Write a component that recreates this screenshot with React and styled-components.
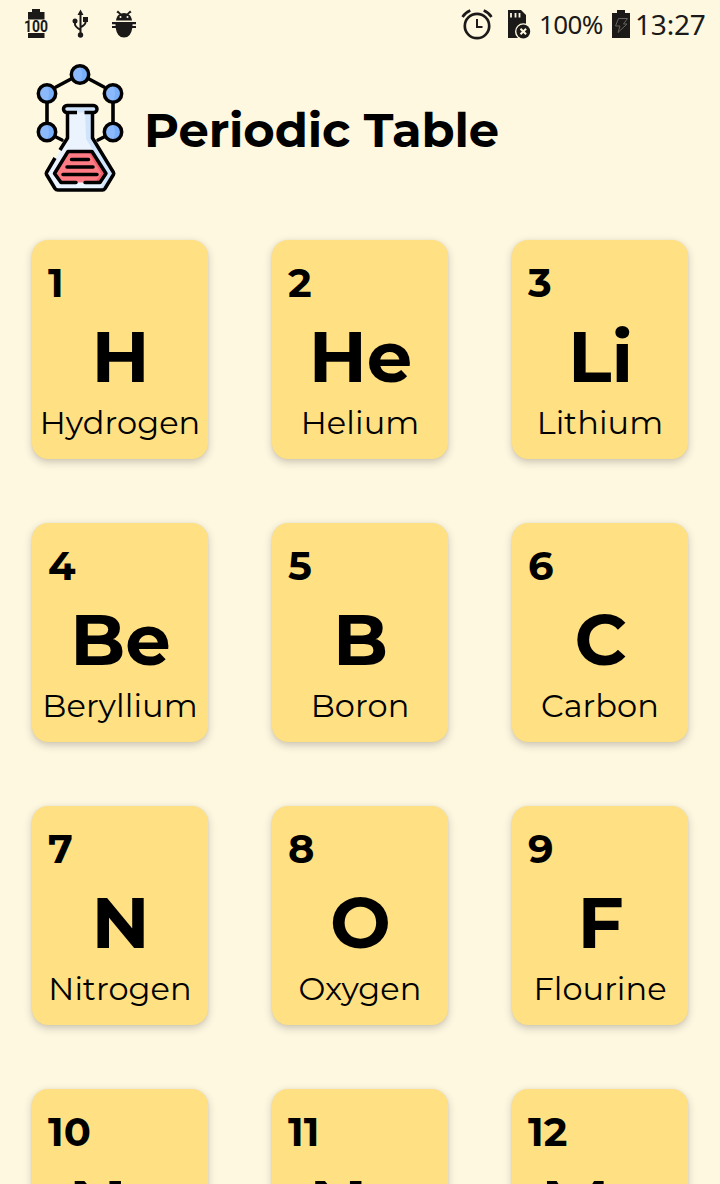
import React from "react";
import styled, { createGlobalStyle } from "styled-components";

const GlobalStyle = createGlobalStyle`
  html, body { margin: 0; padding: 0; background: #fff8e1; }
  body { overflow: hidden; height: 1184px; }
`;

const Screen = styled.main`
  width: 720px;
  height: 1184px;
  overflow: hidden;
  background: #fff8e1;
  color: #000;
  font-family: Montserrat, Inter, "Open Sans", sans-serif;
`;

const StatusBar = styled.div`
  display: flex;
  align-items: center;
  justify-content: space-between;
  height: 48px;
  padding: 0 15px 0 22px;
  color: #1b1a18;
  font-family: "Noto Sans", sans-serif;
`;

const Notifications = styled.div`
  display: flex;
  gap: 16px;
`;

const Indicators = styled.div`
  display: flex;
  align-items: center;
`;

const Glyph = styled.svg`
  display: block;
  flex: none;
  width: ${(p) => p.$w}px;
  height: 32px;
  margin-right: ${(p) => p.$after || 0}px;
`;

const StatusText = styled.span`
  width: ${(p) => p.$w}px;
  font-size: ${(p) => p.$size}px;
  line-height: 48px;
  letter-spacing: ${(p) => p.$track}px;
  white-space: nowrap;
`;

const Header = styled.header`
  display: flex;
  align-items: center;
  height: 160px;
  padding-left: 32px;
`;

const Logo = styled.svg`
  display: block;
  flex: none;
  width: 96px;
  height: 136px;
  margin-bottom: 8px;
`;

const Title = styled.h1`
  margin: 0 0 0 16px;
  padding-top: 4px;
  font-size: 48px;
  line-height: 60px;
  font-weight: 700;
  letter-spacing: -0.13px;
  white-space: nowrap;
`;

const Grid = styled.section`
  display: grid;
  grid-template-columns: repeat(3, 176px);
  grid-auto-rows: 219px;
  gap: 64px;
  padding: 32px;
`;

const Card = styled.article`
  display: flex;
  flex-direction: column;
  align-items: center;
  box-sizing: border-box;
  padding-top: 15px;
  border-radius: 16px;
  background: #ffe082;
  box-shadow: 0 3px 8px rgba(0, 0, 0, 0.22), 0 0 2px rgba(0, 0, 0, 0.06);
`;

const AtomicNumber = styled.div`
  align-self: flex-start;
  margin-left: 16px;
  font-size: 40px;
  line-height: 56px;
  font-weight: 700;
`;

const SymbolText = styled.div`
  padding-left: 1px;
  font-size: 72px;
  line-height: 90px;
  font-weight: 700;
  white-space: nowrap;
`;

const ElementName = styled.div`
  font-size: 32px;
  line-height: 44px;
  font-weight: 400;
  letter-spacing: 0.08px;
  white-space: nowrap;
`;

const elements = [
  { n: 1, symbol: "H", name: "Hydrogen" },
  { n: 2, symbol: "He", name: "Helium" },
  { n: 3, symbol: "Li", name: "Lithium" },
  { n: 4, symbol: "Be", name: "Beryllium" },
  { n: 5, symbol: "B", name: "Boron" },
  { n: 6, symbol: "C", name: "Carbon" },
  { n: 7, symbol: "N", name: "Nitrogen" },
  { n: 8, symbol: "O", name: "Oxygen" },
  { n: 9, symbol: "F", name: "Flourine" },
  { n: 10, symbol: "Ne", name: "Neon" },
  { n: 11, symbol: "Na", name: "Sodium" },
  { n: 12, symbol: "Mg", name: "Magnesium" },
];

const BatteryFull = () => (
  <Glyph $w={28} viewBox="0 0 28 32" fill="currentColor">
    <path d="M10 1h8v3h4.500v7.500H6V4h4zM6 25h16.500v5H6z" />
    <text x="14" y="24" textAnchor="middle" textLength="24" lengthAdjust="spacingAndGlyphs" fontFamily="Roboto" fontSize="16.500" fontWeight="700">100</text>
  </Glyph>
);

const Usb = () => (
  <Glyph $w={28} viewBox="0 0 28 32" fill="currentColor">
    <path d="M14.500 1.500l3 5.500h-6zM17 9h5v5h-5z" />
    <circle cx="9" cy="13" r="2.500" />
    <circle cx="14.500" cy="27" r="2.700" />
    <path d="M14.500 5v21M9 13v3.500q0 2 5.500 5.500M19.500 12v2.500q0 2-5 5" fill="none" stroke="currentColor" strokeWidth="2" />
  </Glyph>
);

const DebugBug = () => (
  <Glyph $w={28} viewBox="0 0 28 32" fill="currentColor">
    <path d="M6 12.500Q6.500 8 9.500 6.200L6.400 4.200l1.600-1.700 3 2.900q3-1 6 0l3-2.900 1.600 1.700-3.100 2Q21.500 8 22 12.500z" />
    <path d="M2 14h24v2.300h-3.500v1.600H26v2h-3.700Q21 29.300 14 29.500 7 29.300 5.700 19.900H2v-2h3.500v-1.600H2z" />
    <circle cx="10.500" cy="9" r="1" fill="#fff8e1" />
    <circle cx="17.500" cy="9" r="1" fill="#fff8e1" />
  </Glyph>
);

const Alarm = () => (
  <Glyph $w={34} $after={14} viewBox="0 0 34 32" fill="none" stroke="currentColor">
    <circle cx="17" cy="18" r="12.200" strokeWidth="2.700" />
    <path d="M17 11v8h5.500" strokeWidth="2" />
    <path d="M2.500 9Q5 4.700 10.300 2.500M31.500 9Q29 4.700 23.700 2.500" strokeWidth="2.500" />
  </Glyph>
);

const SdCard = () => (
  <Glyph $w={24} $after={7} viewBox="0 0 24 32">
    <path d="M0 2h13l5 5v23H0z" fill="currentColor" />
    <path d="M3 5v4.500M7.500 5v4.500M11.500 5v4.500" stroke="#fff8e1" strokeWidth="1.800" />
    <circle cx="15.300" cy="23.500" r="8.300" fill="#fff8e1" />
    <circle cx="15.300" cy="23.500" r="6.900" fill="currentColor" />
    <path d="M12.500 20.700l5.600 5.600M18.100 20.700l-5.600 5.600" stroke="#fff8e1" strokeWidth="2" />
  </Glyph>
);

const Charging = () => (
  <Glyph $w={18} $after={5} viewBox="0 0 18 32">
    <path d="M5 2h8v3h5v25H0V5h5z" fill="currentColor" />
    <path d="M6.500 10.500h9L11.500 16H15L6 24.500 8 18H3.500z" fill="none" stroke="#66635c" strokeWidth="1" />
  </Glyph>
);

const atoms = [[56, 18.500], [23, 37.500], [89, 37.500], [23, 76], [89, 76]];

const FlaskLogo = () => (
  <Logo viewBox="8 0 96 136" strokeLinecap="round" strokeLinejoin="round">
    <path d="M32 31L47 23M65 23L80 31M23 47V67M89 47V67M31 80.500L38 84M81 80.500L74 84" stroke="#000" strokeWidth="3.600" fill="none" />
    {atoms.map(([x, y]) => (
      <g key={x + "-" + y}>
        <circle cx={x} cy={y} r="8.700" fill="#8bb9fb" />
        <path d={`M${x} ${y - 8}a8 8 0 0 1 0 16q4-8 0-16`} fill="#78affa" />
        <circle cx={x} cy={y} r="8.700" fill="none" stroke="#000" strokeWidth="3.500" />
      </g>
    ))}
    <path d="M43.500 55V82L22.500 117.500 31.500 134H81L90 117.500 68.500 82V55z" fill="#ebf3ff" />
    <path d="M61 56H68V82L90 117.500 81 133H76L84 118 62 83z" fill="#d0e5fc" />
    <rect x="40" y="49.500" width="32.500" height="7" rx="3.500" fill="#d0e5fc" />
    <path d="M44 95.500H68L82 117.500 76 126.500H37L30 117.500z" fill="#ff7b83" />
    <path d="M64 95.500H68L82 117.500 76 126.500H71L77 117.500z" fill="#f0606d" />
    <g fill="none" stroke="#000" strokeWidth="3.500">
      <path d="M53 56.500H43a3.500 3.500 0 0 1 0-7H69.500a3.500 3.500 0 0 1 0 7H60.500" strokeLinecap="butt" />
      <path d="M43.500 57V82L36 94M31 102L22.500 116.500Q22 117.500 22.500 118.500L31 132.500Q32 134 34 134H78.500Q80 134 81 132.500L89.500 118.500Q90 117.500 89.500 116.500L68.500 82V57" strokeLinecap="butt" />
      <path d="M52 126.500H37L30.500 117.500 44 95.500H68L82 117.500 76 126.500H61" />
      <path d="M47.500 103.500H64.500M43 111H69M39 118.500H73" />
    </g>
  </Logo>
);

export default function App() {
  return (
    <Screen>
      <GlobalStyle />
      <StatusBar>
        <Notifications>
          <BatteryFull />
          <Usb />
          <DebugBug />
        </Notifications>
        <Indicators>
          <Alarm />
          <SdCard />
          <StatusText $size={26} $track={-0.6} $w={73}>100%</StatusText>
          <Charging />
          <StatusText $size={28} $track={-0.2} $w={70}>13:27</StatusText>
        </Indicators>
      </StatusBar>
      <Header>
        <FlaskLogo />
        <Title>Periodic Table</Title>
      </Header>
      <Grid>
        {elements.map((e) => (
          <Card key={e.n}>
            <AtomicNumber>{e.n}</AtomicNumber>
            <SymbolText>{e.symbol}</SymbolText>
            <ElementName>{e.name}</ElementName>
          </Card>
        ))}
      </Grid>
    </Screen>
  );
}
